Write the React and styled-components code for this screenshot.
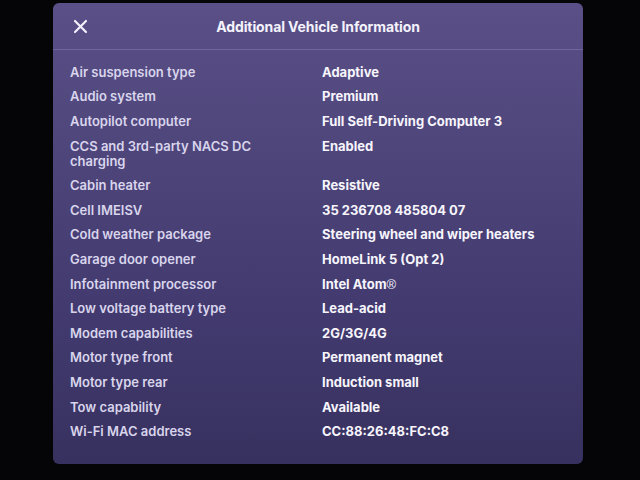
import React from "react";
import styled, { createGlobalStyle } from "styled-components";

const Global = createGlobalStyle`
  html, body { margin: 0; padding: 0; background: #050407; }
  body { width: 640px; height: 480px; overflow: hidden; font-family: Inter, "Open Sans", sans-serif; }
`;

const Screen = styled.div`
  width: 640px;
  height: 480px;
  padding: 3px 57px 0 53px;
  box-sizing: border-box;
  background: #050407;
`;

const Panel = styled.div`
  width: 530px;
  height: 461px;
  border-radius: 6px;
  background: linear-gradient(180deg, #5a5087 0%, #4f467c 30%, #433b70 65%, #37315f 100%);
  display: flex;
  flex-direction: column;
  overflow: hidden;
`;

const Header = styled.div`
  height: 46px;
  display: flex;
  align-items: center;
  justify-content: center;
  position: relative;
  border-bottom: 1px solid #6f66a0;
  flex-shrink: 0;
`;

const Close = styled.button`
  position: absolute;
  left: 20px;
  top: 16px;
  width: 15px;
  height: 15px;
  padding: 0;
  border: 0;
  background: none;
  display: flex;
`;

const Title = styled.div`
  color: #f4f2fb;
  font-weight: 700;
  font-size: 14px;
  letter-spacing: -0.1px;
`;

const Body = styled.div`
  padding: 10px 17px 0 17px;
  display: flex;
  flex-direction: column;
`;

const Row = styled.div`
  display: grid;
  grid-template-columns: 252px 1fr;
  padding: 4.8px 0;
  line-height: 15px;
  font-size: 13px;
`;

const Label = styled.div`
  color: #d9d5ec;
  font-weight: 600;
  max-width: 200px;
`;

const Value = styled.div`
  color: #f7f5fc;
  font-weight: 700;
`;

const Reg = styled.span`
  font-family: "Liberation Sans", sans-serif;
  font-weight: 400;
  font-size: 13px;
  line-height: 15px;
`;

const rows = [
  ["Air suspension type", "Adaptive"],
  ["Audio system", "Premium"],
  ["Autopilot computer", "Full Self-Driving Computer 3"],
  ["CCS and 3rd-party NACS DC charging", "Enabled"],
  ["Cabin heater", "Resistive"],
  ["Cell IMEISV", "35 236708 485804 07"],
  ["Cold weather package", "Steering wheel and wiper heaters"],
  ["Garage door opener", "HomeLink 5 (Opt 2)"],
  ["Infotainment processor", <>Intel Atom<Reg>®</Reg></>],
  ["Low voltage battery type", "Lead-acid"],
  ["Modem capabilities", "2G/3G/4G"],
  ["Motor type front", "Permanent magnet"],
  ["Motor type rear", "Induction small"],
  ["Tow capability", "Available"],
  ["Wi-Fi MAC address", "CC:88:26:48:FC:C8"],
];

export default function App() {
  return (
    <>
      <Global />
      <Screen>
        <Panel>
          <Header>
            <Close aria-label="Close">
              <svg width="15" height="15" viewBox="0 0 15 15">
                <path d="M2 2 L13 13 M13 2 L2 13" stroke="#f2f0fa" strokeWidth="2.2" strokeLinecap="round" />
              </svg>
            </Close>
            <Title>Additional Vehicle Information</Title>
          </Header>
          <Body>
            {rows.map(([k, v]) => (
              <Row key={k}>
                <Label>{k}</Label>
                <Value>{v}</Value>
              </Row>
            ))}
          </Body>
        </Panel>
      </Screen>
    </>
  );
}
